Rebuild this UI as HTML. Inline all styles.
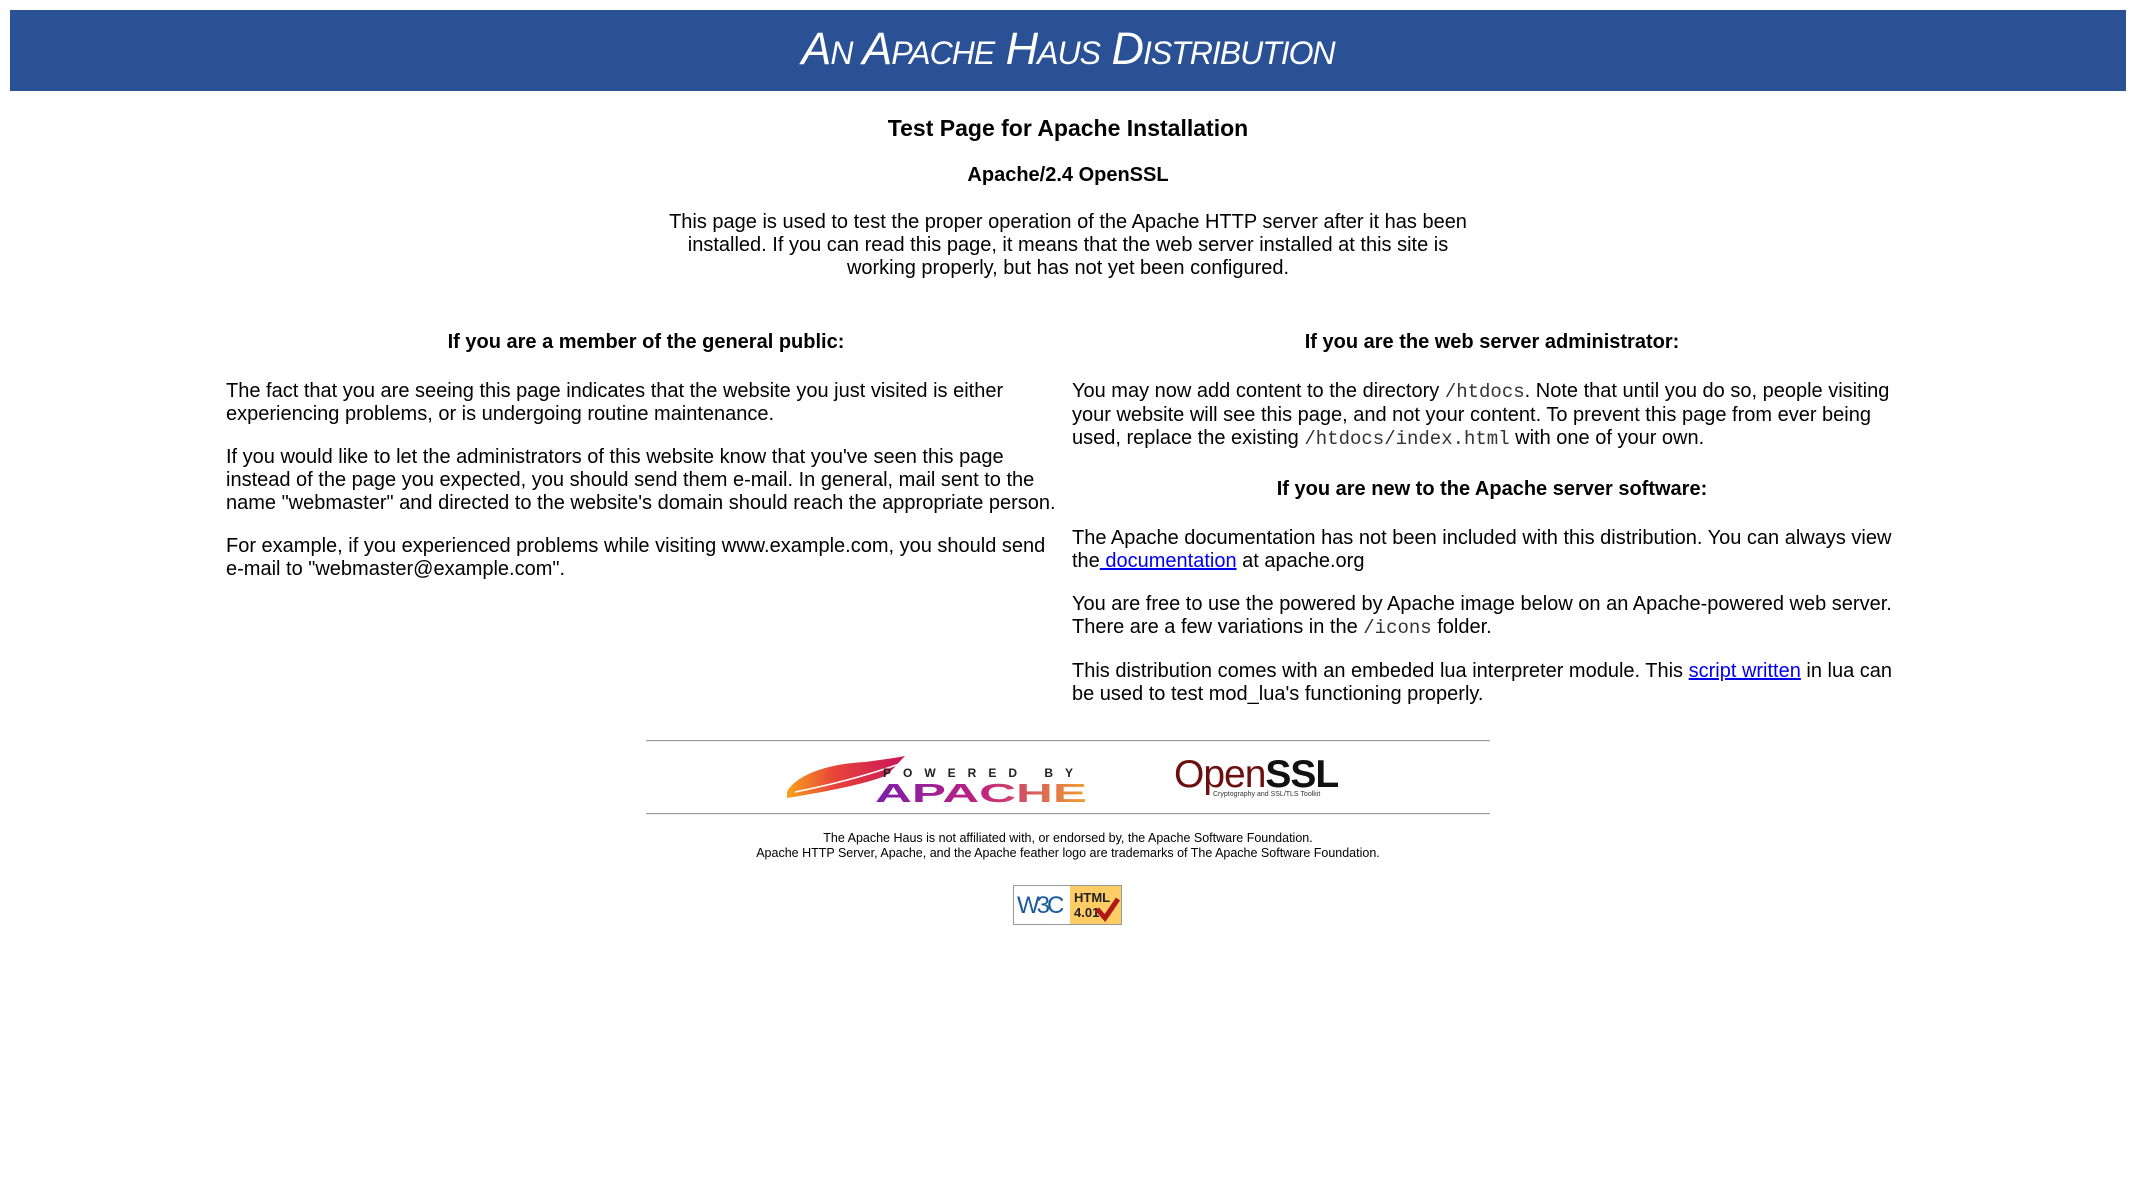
<!DOCTYPE html>
<html><head><meta charset="utf-8"><style>
html,body{margin:0;padding:0;background:#fff;width:2136px;height:1198px;overflow:hidden;position:relative;font-family:"Liberation Sans",Arial,sans-serif;color:#000}
.a{position:absolute;white-space:nowrap}
.t{font-size:20px;line-height:23px}
.c{text-align:center}
.b{font-weight:bold}
code{font-family:"Liberation Mono",monospace;font-size:19px;color:#333}
a{color:#00e;text-decoration:underline}
.hr{position:absolute;left:646px;width:844px;height:1px;background:#999;border-bottom:1px solid #eee}
</style></head><body>
<div class="a" style="left:10px;top:10px;width:2116px;height:81px;background:#2a5095"></div>
<div class="a c" style="left:10px;top:23px;width:2116px;font-size:45px;line-height:52px;color:#fff;font-style:italic;font-variant:small-caps;letter-spacing:-1px">An Apache Haus Distribution</div>
<div class="a c b" style="left:0;top:114px;width:2136px;font-size:23px;line-height:28px">Test Page for Apache Installation</div>
<div class="a c b" style="left:0;top:164px;width:2136px;font-size:20px;line-height:23px">Apache/2.4 OpenSSL</div>
<div class="a c t" style="left:0;top:211px;width:2136px">This page is used to test the proper operation of the Apache HTTP server after it has been<br>installed. If you can read this page, it means that the web server installed at this site is<br>working properly, but has not yet been configured.</div>

<div class="a c t b" style="left:226px;top:331px;width:840px">If you are a member of the general public:</div>
<div class="a t" style="left:226px;top:380px">The fact that you are seeing this page indicates that the website you just visited is either<br>experiencing problems, or is undergoing routine maintenance.</div>
<div class="a t" style="left:226px;top:446px">If you would like to let the administrators of this website know that you've seen this page<br>instead of the page you expected, you should send them e-mail. In general, mail sent to the<br>name "webmaster" and directed to the website's domain should reach the appropriate person.</div>
<div class="a t" style="left:226px;top:535px">For example, if you experienced problems while visiting www.example.com, you should send<br>e-mail to "webmaster@example.com".</div>

<div class="a c t b" style="left:1072px;top:331px;width:840px">If you are the web server administrator:</div>
<div class="a t" style="left:1072px;top:380px">You may now add content to the directory <code>/htdocs</code>. Note that until you do so, people visiting<br>your website will see this page, and not your content. To prevent this page from ever being<br>used, replace the existing <code>/htdocs/index.html</code> with one of your own.</div>
<div class="a c t b" style="left:1072px;top:478px;width:840px">If you are new to the Apache server software:</div>
<div class="a t" style="left:1072px;top:527px">The Apache documentation has not been included with this distribution. You can always view<br>the<a> documentation</a> at apache.org</div>
<div class="a t" style="left:1072px;top:593px">You are free to use the powered by Apache image below on an Apache-powered web server.<br>There are a few variations in the <code>/icons</code> folder.</div>
<div class="a t" style="left:1072px;top:660px">This distribution comes with an embeded lua interpreter module. This <a>script written</a> in lua can<br>be used to test mod_lua's functioning properly.</div>

<div class="hr" style="top:740px"></div>
<div class="hr" style="top:813px"></div>

<svg class="a" style="left:785px;top:754px" width="310" height="50" viewBox="0 0 310 50">
<defs><linearGradient id="f" x1="0" x2="1"><stop offset="0" stop-color="#f7a21b"/><stop offset=".4" stop-color="#e8443a"/><stop offset="1" stop-color="#c8145a"/></linearGradient>
<linearGradient id="p" x1="0" x2="1"><stop offset="0" stop-color="#7a1fa8"/><stop offset=".5" stop-color="#c02080"/><stop offset="1" stop-color="#f0a030"/></linearGradient></defs>
<path d="M2 38 C10 22 40 10 80 8 C95 6 110 4 120 2 C112 10 108 16 100 22 C80 30 40 38 2 44 Z" fill="url(#f)"/>
<path d="M10 38 C50 30 90 20 130 4" stroke="#fff" stroke-width="1.5" fill="none"/>
<text x="98" y="23" font-family="Liberation Sans,sans-serif" font-size="12" font-weight="bold" textLength="190" lengthAdjust="spacing" fill="#222">POWERED BY</text>
<text x="90" y="48" font-family="Liberation Sans,sans-serif" font-size="26" font-weight="bold" textLength="212" lengthAdjust="spacingAndGlyphs" fill="url(#p)">APACHE</text>
</svg>
<div class="a" style="left:1174px;top:754px;font-size:39px;line-height:42px;letter-spacing:-1px"><span style="color:#6b0f0f">Open</span><span style="font-weight:bold;color:#111">SSL</span></div>
<div class="a" style="left:1213px;top:791px;font-size:7px;line-height:8px;color:#333">Cryptography and SSL/TLS Toolkit</div>

<div class="a c" style="left:0;top:831px;width:2136px;font-size:12.5px;line-height:15px">The Apache Haus is not affiliated with, or endorsed by, the Apache Software Foundation.<br>Apache HTTP Server, Apache, and the Apache feather logo are trademarks of The Apache Software Foundation.</div>

<div class="a" style="left:1013px;top:885px;width:109px;height:40px;border:1px solid #999;box-sizing:border-box;background:#fff">
<div class="a" style="left:3px;top:6px;font-size:24px;color:#1a5aa0;letter-spacing:-3px">W3C</div>
<div class="a" style="left:56px;top:0;width:51px;height:38px;background:#fc6"></div>
<div class="a b" style="left:60px;top:4px;font-size:13px;line-height:15px;color:#222">HTML<br>4.01</div>
<svg class="a" style="left:80px;top:10px" width="26" height="26"><path d="M3 13 L11 22 L24 3" stroke="#b01818" stroke-width="5" fill="none"/></svg>
</div>
</body></html>
